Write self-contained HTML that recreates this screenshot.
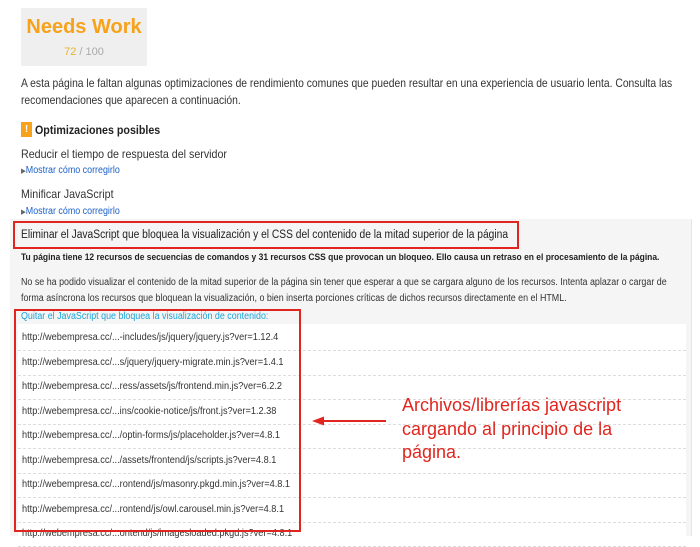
<!DOCTYPE html>
<html><head><meta charset="utf-8"><style>
*{margin:0;padding:0;box-sizing:border-box}
body{width:700px;height:536px;overflow:hidden;background:#fff;font-family:"Liberation Sans",sans-serif;color:#222;position:relative}
.a{position:absolute;white-space:nowrap}
.c{transform:scaleX(.89);transform-origin:0 0}
.lnk{color:#1a5fc7;font-size:10px}
.row{position:absolute;left:18px;width:668px;height:24.5px;border-bottom:1px dashed #ddd;font-size:10px;color:#333;padding-left:4px;line-height:24px}
.row span{display:inline-block;transform:scaleX(.92);transform-origin:0 0}
</style></head><body>
<div class="a" style="left:21px;top:8px;width:126px;height:58px;background:#efefef"></div>
<div class="a" style="left:21px;top:16px;width:126px;text-align:center;color:#f7a21b;font-weight:bold;font-size:20px">Needs Work</div>
<div class="a" style="left:21px;top:46px;width:126px;text-align:center;font-size:11px;color:#aaa"><span style="color:#e5b62a">72</span> / 100</div>
<div class="a" style="left:21px;top:75px;font-size:12px;line-height:17px;color:#333;transform:scaleX(.86);transform-origin:0 0">A esta página le faltan algunas optimizaciones de rendimiento comunes que pueden resultar en una experiencia de usuario lenta. Consulta las<br>recomendaciones que aparecen a continuación.</div>
<div class="a" style="left:21px;top:122px;width:11px;height:15px;background:#f7a21b;color:#fff;font-size:10px;font-weight:bold;text-align:center;line-height:15px">!</div>
<div class="a c" style="left:35px;top:123px;font-size:12px;font-weight:bold">Optimizaciones posibles</div>
<div class="a c" style="left:21px;top:147px;font-size:12px;color:#333">Reducir el tiempo de respuesta del servidor</div>
<div class="a lnk c" style="left:21px;top:165px"><span style="font-size:7px;color:#666">▶</span>Mostrar cómo corregirlo</div>
<div class="a c" style="left:21px;top:187px;font-size:12px;color:#333">Minificar JavaScript</div>
<div class="a lnk c" style="left:21px;top:206px"><span style="font-size:7px;color:#666">▶</span>Mostrar cómo corregirlo</div>
<div class="a" style="left:10px;top:219px;width:682px;height:317px;background:#f5f5f5;border-right:1px solid #e6e6e6"></div>
<div class="a" style="left:13px;top:221px;width:506px;height:28px;border:2px solid #e0261f"></div>
<div class="a c" style="left:21px;top:229px;font-size:11.5px;color:#222">Eliminar el JavaScript que bloquea la visualización y el CSS del contenido de la mitad superior de la página</div>
<div class="a c" style="left:21px;top:252px;font-size:9.5px;font-weight:bold">Tu página tiene 12 recursos de secuencias de comandos y 31 recursos CSS que provocan un bloqueo. Ello causa un retraso en el procesamiento de la página.</div>
<div class="a c" style="left:21px;top:275px;font-size:10px;line-height:16px;color:#333">No se ha podido visualizar el contenido de la mitad superior de la página sin tener que esperar a que se cargara alguno de los recursos. Intenta aplazar o cargar de<br>forma asíncrona los recursos que bloquean la visualización, o bien inserta porciones críticas de dichos recursos directamente en el HTML.</div>
<div class="a c" style="left:21px;top:311px;font-size:10px;color:#1aa3d9">Quitar el JavaScript que bloquea la visualización de contenido:</div>
<div class="a" style="left:18px;top:324px;width:668px;height:212px;background:#fff"></div>
<div class="row" style="top:326px"><span>http://webempresa.cc/...-includes/js/jquery/jquery.js?ver=1.12.4</span></div>
<div class="row" style="top:351px"><span>http://webempresa.cc/...s/jquery/jquery-migrate.min.js?ver=1.4.1</span></div>
<div class="row" style="top:375px"><span>http://webempresa.cc/...ress/assets/js/frontend.min.js?ver=6.2.2</span></div>
<div class="row" style="top:400px"><span>http://webempresa.cc/...ins/cookie-notice/js/front.js?ver=1.2.38</span></div>
<div class="row" style="top:424px"><span>http://webempresa.cc/.../optin-forms/js/placeholder.js?ver=4.8.1</span></div>
<div class="row" style="top:449px"><span>http://webempresa.cc/.../assets/frontend/js/scripts.js?ver=4.8.1</span></div>
<div class="row" style="top:473px"><span>http://webempresa.cc/...rontend/js/masonry.pkgd.min.js?ver=4.8.1</span></div>
<div class="row" style="top:498px"><span>http://webempresa.cc/...rontend/js/owl.carousel.min.js?ver=4.8.1</span></div>
<div class="row" style="top:522px"><span>http://webempresa.cc/...ontend/js/imagesloaded.pkgd.js?ver=4.8.1</span></div>
<div class="a" style="left:14px;top:309px;width:287px;height:223px;border:2px solid #e0261f"></div>
<svg class="a" style="left:310px;top:415px" width="78" height="12"><line x1="8" y1="6" x2="76" y2="6" stroke="#e0261f" stroke-width="2"/><polygon points="2,6 14,1.5 14,10.5" fill="#e0261f"/></svg>
<div class="a" style="left:402px;top:394px;font-size:18px;line-height:23.5px;color:#e0261f">Archivos/librerías javascript<br>cargando al principio de la<br>página.</div>
</body></html>
